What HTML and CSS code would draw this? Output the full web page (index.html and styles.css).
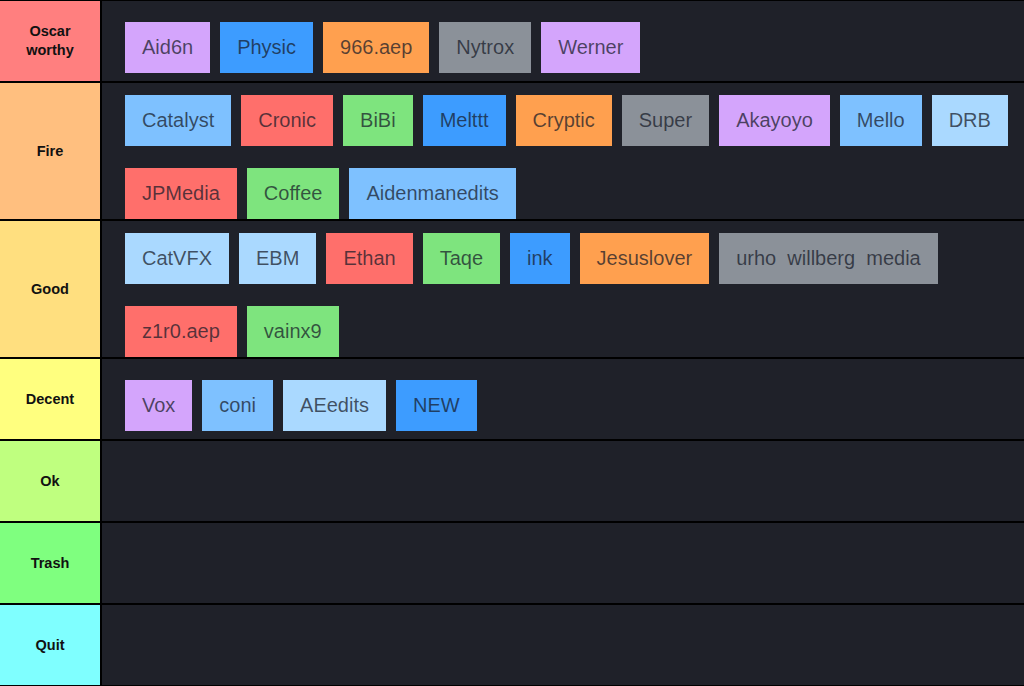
FILE: index.html
```html
<!DOCTYPE html>
<html lang="en">
<head>
<meta charset="utf-8">
<title>Tier list</title>
<link rel="stylesheet" href="styles.css">
</head>
<body>
<div class="board">
  <div class="tier">
    <div class="label t-oscar">Oscar<br>worthy</div>
    <div class="items">
      <div class="item c-purple">Aid6n</div>
      <div class="item c-blue">Physic</div>
      <div class="item c-orange">966.aep</div>
      <div class="item c-gray">Nytrox</div>
      <div class="item c-purple">Werner</div>
    </div>
  </div>
  <div class="tier">
    <div class="label t-fire">Fire</div>
    <div class="items">
      <div class="item c-light">Catalyst</div>
      <div class="item c-red">Cronic</div>
      <div class="item c-green">BiBi</div>
      <div class="item c-blue">Melttt</div>
      <div class="item c-orange">Cryptic</div>
      <div class="item c-gray">Super</div>
      <div class="item c-purple">Akayoyo</div>
      <div class="item c-light">Mello</div>
      <div class="item c-pale">DRB</div>
      <div class="item c-red">JPMedia</div>
      <div class="item c-green">Coffee</div>
      <div class="item c-light">Aidenmanedits</div>
    </div>
  </div>
  <div class="tier">
    <div class="label t-good">Good</div>
    <div class="items">
      <div class="item c-pale">CatVFX</div>
      <div class="item c-pale">EBM</div>
      <div class="item c-red">Ethan</div>
      <div class="item c-green">Taqe</div>
      <div class="item c-blue">ink</div>
      <div class="item c-orange">Jesuslover</div>
      <div class="item c-gray">urho  willberg  media</div>
      <div class="item c-red">z1r0.aep</div>
      <div class="item c-green">vainx9</div>
    </div>
  </div>
  <div class="tier">
    <div class="label t-decent">Decent</div>
    <div class="items">
      <div class="item c-purple">Vox</div>
      <div class="item c-light">coni</div>
      <div class="item c-pale">AEedits</div>
      <div class="item c-blue">NEW</div>
    </div>
  </div>
  <div class="tier">
    <div class="label t-ok">Ok</div>
    <div class="items"></div>
  </div>
  <div class="tier">
    <div class="label t-trash">Trash</div>
    <div class="items"></div>
  </div>
  <div class="tier">
    <div class="label t-quit">Quit</div>
    <div class="items"></div>
  </div>
</div>
</body>
</html>
```

FILE: styles.css
```css
html, body {
  margin: 0;
  padding: 0;
  background: #000;
}

body {
  font-family: "Liberation Sans", Arial, sans-serif;
}

.board {
  display: flex;
  flex-direction: column;
  gap: 2px;
  padding-top: 1px;
  width: 1024px;
  height: 686px;
  box-sizing: border-box;
}

.tier {
  display: flex;
  min-height: 80px;
}

.label {
  width: 100px;
  flex-shrink: 0;
  border-right: 2px solid #000;
  display: flex;
  align-items: center;
  justify-content: center;
  text-align: center;
  font-weight: bold;
  font-size: 14.5px;
  line-height: 19px;
  color: #111;
}

.t-oscar { background: #ff7f7f; }
.t-fire { background: #ffbf7f; }
.t-good { background: #ffdf7f; }
.t-decent { background: #ffff7f; }
.t-ok { background: #bfff7f; }
.t-trash { background: #7fff7f; }
.t-quit { background: #7fffff; }

.items {
  flex: 1;
  display: flex;
  flex-wrap: wrap;
  align-content: center;
  column-gap: 10px;
  row-gap: 10px;
  padding: 0 6px 0 23px;
  background: #1f2129;
  min-height: 80px;
  box-sizing: border-box;
}

.item {
  margin-top: 12px;
  height: 51px;
  line-height: 51px;
  padding: 0 17px;
  font-size: 20px;
  white-space: pre;
  color: rgba(22, 26, 40, 0.72);
}

.c-purple { background: #d4a5fc; }
.c-blue { background: #3d9cff; }
.c-orange { background: #ffa04f; }
.c-gray { background: #8b9199; }
.c-light { background: #7ec1ff; }
.c-red { background: #ff6f6b; }
.c-green { background: #7ee47e; }
.c-pale { background: #aad9ff; }
```
